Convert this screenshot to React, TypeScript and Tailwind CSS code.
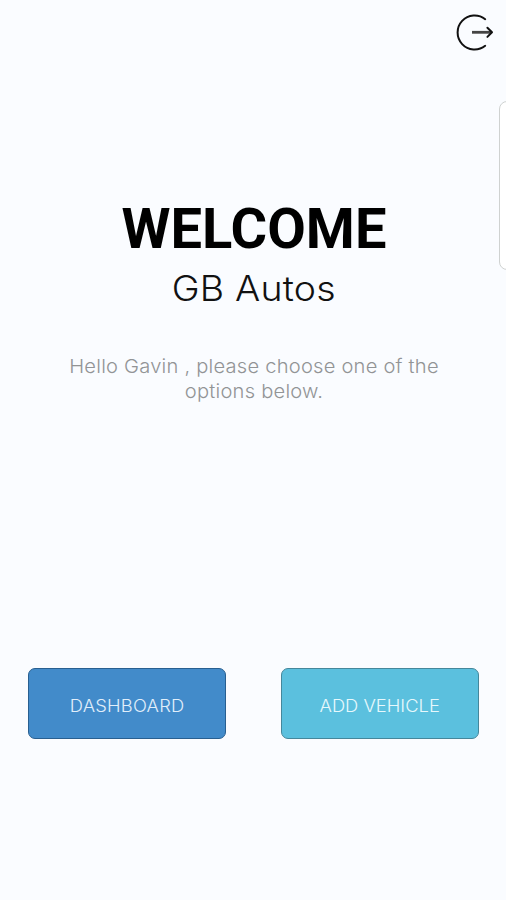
import React from 'react';

const LogoutIcon: React.FC = () => (
  <svg width="38" height="38" viewBox="0 0 38 38" fill="none" stroke="#111" strokeWidth="2" strokeLinecap="round">
    <path d="M29.2 5.2A17 17 0 1 0 29.2 31.8" />
    <path d="M16 18.3H35" stroke="#444" strokeWidth="2.8" strokeLinecap="butt" />
    <path d="M31.4 13.7L36 18.3L31.4 22.9" strokeLinejoin="round" />
  </svg>
);

interface ActionButtonProps {
  label: string;
  className: string;
}

const ActionButton: React.FC<ActionButtonProps> = ({ label, className }) => (
  <button
    className={`flex h-[71px] w-[198px] items-center justify-center rounded-[7px] border pt-1.5 text-[17px] font-light whitespace-nowrap ${className}`}
  >
    <span className="scale-x-108">{label}</span>
  </button>
);

export default function App() {
  return (
    <main className="relative flex h-[900px] w-full flex-col overflow-hidden bg-[#fafcff] font-['Inter',sans-serif]">
      <header className="flex justify-end pt-3.5 pr-3">
        <button aria-label="Log out">
          <LogoutIcon />
        </button>
      </header>

      {/* Edge of the side panel, mostly off screen */}
      <aside className="absolute top-[101px] -right-5 h-[169px] w-[27px] rounded-lg border border-[#cfd2d1] bg-white" />

      <section className="mt-[145px] flex flex-col items-center pl-0.5 text-center">
        <h1 className="font-['Roboto',sans-serif] text-[56px] leading-[64px] font-bold text-black">WELCOME</h1>
        <h2 className="mt-[5px] scale-x-107 text-[35px] leading-[44px] font-light tracking-[0.2px] text-[#111]">
          GB Autos
        </h2>
        <p className="mt-11 w-[400px] scale-x-106 text-[19px] leading-[25px] font-light tracking-[0.2px] text-[#929496]">
          Hello Gavin , please choose one of the
          <br />
          options below.
        </p>
      </section>

      <div className="mt-auto mb-[161px] flex justify-between pr-[27px] pl-7">
        <ActionButton label="DASHBOARD" className="border-[#285f90] bg-[#428bca] tracking-[0.2px] text-[#e0eefa]" />
        <ActionButton label="ADD VEHICLE" className="border-[#45879b] bg-[#5bc0de] text-[#e6f8fc]" />
      </div>
    </main>
  );
}
